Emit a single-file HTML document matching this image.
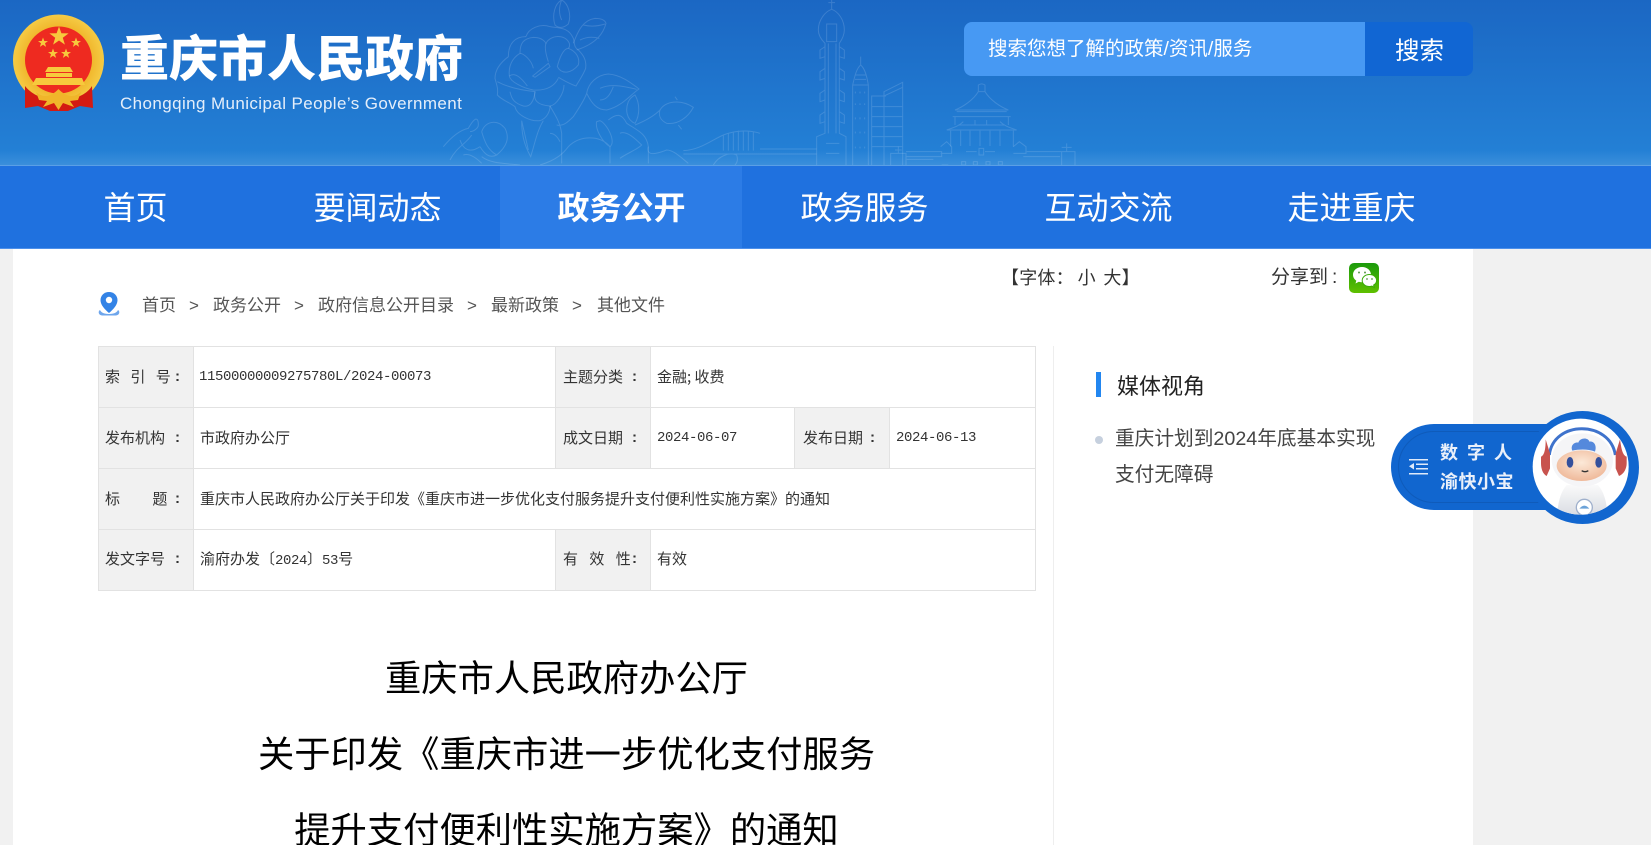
<!DOCTYPE html>
<html lang="zh-CN"><head><meta charset="utf-8"><title>重庆市人民政府</title>
<style>
html,body{margin:0;padding:0;width:1651px;height:845px;overflow:hidden;background:#f1f1f1}
body{position:relative;font-family:"Liberation Sans","Noto Sans CJK SC",sans-serif;color:#333}
div,span,svg{box-sizing:border-box}
.a{position:absolute;white-space:nowrap}
.hd{position:absolute;left:0;top:0;width:1651px;height:165px;background:linear-gradient(#1b67c3,#2482d7)}
.nav{position:absolute;left:0;top:165px;width:1651px;height:84px;background:#1f71df;border-top:1px solid #5a9fe6;border-bottom:1px solid #4d90ea}
.n{position:absolute;top:187px;width:243px;height:42px;line-height:42px;text-align:center;font-size:32px;color:#fff}
.wrap{position:absolute;left:13px;top:249px;width:1460px;height:596px;background:#fff}
.cell{position:absolute;background:#f1f1f1}
.ln{position:absolute;background:#e2e2e2}
.tb{position:absolute;font:15px/20px "WenQuanYi Zen Hei","Noto Sans CJK SC",sans-serif;color:#333;white-space:nowrap}
.c{position:absolute;font:bold 15px/20px "Liberation Sans",sans-serif;color:#333}
.num{font-family:"Liberation Mono",monospace;font-size:14px;letter-spacing:-.4px}
.bc{position:absolute;top:294px;font-size:17px;line-height:24px;color:#555;white-space:nowrap}
.h{position:absolute;left:98px;width:937px;text-align:center;font-size:36.300px;line-height:50px;color:#000;white-space:nowrap}
</style></head><body>
<div class="hd"></div>
<svg class="a" style="left:0;top:0" width="1651" height="165" viewBox="0 0 1651 165" fill="none" stroke="#bcd9f5" stroke-opacity=".2">
<g transform="translate(440,0) scale(.33333)" stroke-width="3">
<path d="M345 75C335 45 345 10 365 0C385 10 395 45 385 72C370 85 355 85 345 75ZM365 0C355 25 358 45 365 60"/>
<path d="M400 130C415 90 430 60 465 55C485 55 495 60 498 70C490 100 470 130 410 150M430 75C450 80 470 80 495 72M420 120C440 110 460 110 478 115"/>
<path d="M258 110C265 85 300 70 330 80C355 85 385 80 400 115C405 130 400 140 415 150C430 165 440 180 437 205C430 225 415 245 408 258C385 250 370 240 355 232"/>
<path d="M258 110C225 110 205 130 205 170C185 185 165 205 165 235C170 255 175 265 172 285C185 300 205 305 225 320C230 345 270 365 300 362C320 355 330 335 330 318"/>
<path d="M240 160C240 130 250 115 280 112C300 112 312 120 318 130C330 105 375 100 388 130C390 138 388 142 385 145M240 160C215 175 205 200 208 228C210 245 250 265 280 270C310 272 340 265 355 235"/>
<path d="M318 130C312 145 320 170 325 185M280 205C275 180 250 160 240 160M385 145C370 145 358 175 352 200C365 225 395 220 415 195C420 175 410 155 385 145"/>
<path d="M278 228L325 190 330 200 285 232ZM208 228C225 215 245 235 262 258M172 245C200 260 240 270 285 275C280 300 290 315 330 318C350 315 372 280 372 255"/>
<path d="M210 275C215 300 225 310 250 318C270 322 282 305 285 275M245 362C245 400 250 430 272 470C285 430 290 395 310 362M245 362L265 450M330 318C345 345 360 365 365 400V490M350 375C370 380 385 365 400 350"/>
<path d="M330 400C345 400 355 415 360 425M400 350C420 320 435 295 440 280C445 250 470 225 505 222C545 225 575 250 597 267C570 285 545 320 500 330C470 330 455 310 440 280M480 265C510 250 550 258 590 268M520 260C510 285 500 300 480 300"/>
<path d="M565 305C555 330 560 360 585 370C600 345 600 310 585 285C575 290 570 295 565 305ZM585 375C610 365 640 350 660 330C675 305 720 295 760 322C745 350 715 375 680 370C660 360 655 345 660 330M705 290L712 300M715 375L725 388"/>
<path d="M470 365C465 385 485 425 510 440C530 425 500 370 480 362ZM505 360C530 340 545 340 560 370C590 390 620 400 625 440C620 460 630 470 680 450C700 450 720 470 745 490M510 440C480 405 420 405 385 440C370 460 350 480 300 495"/>
<path d="M540 400C560 390 590 420 605 435C590 450 560 460 540 475M510 440V490M625 440V490"/>
<path d="M10 440C35 410 60 390 85 385C105 350 115 350 115 375C115 385 100 395 90 395M125 395C135 365 170 355 195 385C210 415 200 440 170 465M125 395C135 430 145 450 170 465C150 475 135 465 120 440M30 480C50 440 80 430 95 405M60 420C70 450 90 460 120 440M70 465C85 460 105 470 125 490M125 470C150 490 190 490 240 495"/>
<path d="M730 452C780 450 815 420 850 405C890 390 930 390 960 400M730 462H960M850 405V452M865 400V452M880 395V452M895 392V452M910 392V452M925 392V452M940 395V452M820 495C835 470 865 455 890 465C895 480 890 490 885 495"/>
</g>
<g transform="translate(800,0) scale(.33333)" stroke-width="3">
<path d="M-120 447H50M-120 462H50"/>
<path d="M50 495V410L75 400V130C65 120 55 105 55 90C55 60 75 35 95 28C115 35 133 60 133 90C133 105 125 120 118 130V400L138 410V495M95 28V0M85 8H105M80 72H110V125H80ZM60 150L75 140V170L60 175ZM133 150L118 140V170L133 175ZM60 215L75 205V235L60 240ZM133 215L118 205V235L133 240ZM60 280L75 270V300L60 305ZM133 280L118 270V300L133 305ZM60 345L75 335V365L60 370ZM133 345L118 335V365L133 370ZM85 130V400M108 130V400M78 430H118M78 460H118"/>
<path d="M158 495V255C165 225 170 205 182 195C194 205 200 225 205 255V495M182 170V195M158 255H205M165 225H198M165 238H198M166 275V280M180 275V280M194 275V280M166 310V315M180 310V315M194 310V315M166 352V358M180 352V358M194 352V358M166 395V400M180 395V400M194 395V400M166 440V445M180 440V445M194 440V445"/>
<path d="M215 495V288H258M252 495V275L308 247V495M215 320H308M215 350H308M215 380H308M215 410H308M215 440H308M252 288L308 262"/>
<path d="M535 275V255Q545 248 555 255V275ZM535 275C520 300 490 320 465 330H625C600 320 570 300 555 275M470 335H620M465 350V375M625 350V375M458 350H632M475 375H615M440 390C470 380 480 375 490 365M650 390C620 380 610 375 600 365M440 390H650M452 392V440M640 392V440M482 392V438M510 392V438M540 392V438M570 392V438M600 392V438M525 360V375M560 360V375"/>
<path d="M272 495V460H318V495M295 440V460M285 450H305M318 455H425V470H318M320 478H400M422 440L440 425 455 440V460H422M498 455H530M555 455H585M537 445H551V465H537ZM640 440L658 425 678 440V460H640M670 470H780M680 455H785V495M785 455H825V495M800 430V455M785 442H815M425 495H445M485 485H497V495H485ZM520 485H532V495H520ZM558 485H570V495H558ZM595 485H607V495H595Z"/>
</g>
</svg>
<div class="a" style="left:0;top:150px;width:1651px;height:15px;background:linear-gradient(rgba(255,255,255,0),rgba(255,255,255,.1))"></div>

<!-- emblem -->
<svg class="a" style="left:10px;top:12px" width="98" height="104" viewBox="10 12 98 104">
<defs><radialGradient id="g" cx="50%" cy="50%" r="50%"><stop offset=".7" stop-color="#f0b52a"/><stop offset="1" stop-color="#f5cb45"/></radialGradient></defs>
<circle cx="58.500" cy="60" r="45.500" fill="url(#g)"/>
<circle cx="58.500" cy="60" r="33.500" fill="#ee2a20"/>
<path d="M59 26.500l2.400 6.800 7.200.1-5.800 4.300 2.100 6.900-5.900-4.100-5.900 4.100 2.100-6.900-5.800-4.300 7.200-.1z" fill="#f7c93d"/>
<g fill="#f7c93d"><path d="M43 37.500l1.300 3.500 3.700.1-3 2.200 1.100 3.600-3.100-2.100-3.100 2.100 1.100-3.600-3-2.200 3.700-.1z"/><path d="M76 37.500l1.300 3.500 3.700.1-3 2.200 1.100 3.600-3.100-2.100-3.100 2.100 1.100-3.600-3-2.200 3.700-.1z"/><path d="M53 48.500l1.300 3.500 3.700.1-3 2.200 1.100 3.600-3.100-2.100-3.100 2.100 1.100-3.600-3-2.200 3.700-.1z"/><path d="M66 48.500l1.300 3.500 3.700.1-3 2.200 1.100 3.600-3.100-2.100-3.100 2.100 1.100-3.600-3-2.200 3.700-.1z"/>
<path d="M48 67H70L73 72H45ZM46 73H72V77H46ZM36 78H82L85 85H32Z"/></g>
<path d="M25 86C30 92 34 94 38 96L50 100H68L80 96C84 94 88 92 92 86L93 108 80 106 68 111H50L38 106 25 108Z" fill="#d31a12"/>
<path d="M36 92C44 99 52 96 58.500 89 65 96 73 99 81 92L78 100 70 101 74 107 63 103 58.500 110 54 103 43 107 47 101 39 100Z" fill="#f0b52a"/>
</svg>
<div class="a" style="left:120px;top:29px;font-size:49px;line-height:62px;font-weight:900;color:#fff;letter-spacing:0">重庆市人民政府</div>
<div class="a" style="left:120px;top:93px;font-size:17px;line-height:22px;color:#e4eefa;letter-spacing:.4px">Chongqing Municipal People’s Government</div>

<!-- search -->
<div class="a" style="left:964px;top:22px;width:401px;height:54px;background:#4799f3;border-radius:8px 0 0 8px"></div>
<div class="a" style="left:988px;top:36px;font-size:19.500px;line-height:26px;color:#fff">搜索您想了解的政策/资讯/服务</div>
<div class="a" style="left:1365px;top:22px;width:108px;height:54px;background:#1166d3;border-radius:0 8px 8px 0;text-align:center;font-size:24.500px;line-height:60px;color:#fff;padding-left:1px">搜索</div>

<!-- nav -->
<div class="nav"></div>
<div class="a" style="left:500px;top:166px;width:242px;height:82px;background:#2c7ce6"></div>
<div class="n" style="left:14px">首页</div>
<div class="n" style="left:256px">要闻动态</div>
<div class="n" style="left:500px;font-weight:700">政务公开</div>
<div class="n" style="left:743px">政务服务</div>
<div class="n" style="left:987px">互动交流</div>
<div class="n" style="left:1230px">走进重庆</div>

<div class="wrap"></div>

<!-- tools -->
<div class="a" style="left:1001px;top:265px;font-size:18px;line-height:26px;color:#333;letter-spacing:.2px">【字体：&thinsp;小&thinsp;&thinsp;大】</div>
<div class="a" style="left:1271px;top:265px;font-size:19px;line-height:26px;color:#333">分享到</div>
<div class="a" style="left:1332px;top:265px;font-size:19px;line-height:26px;color:#333">:</div>
<div class="a" style="left:1349px;top:263px;width:30px;height:30px;border-radius:5px;background:linear-gradient(#1b9a0c,#5fc000)"></div>
<svg class="a" style="left:1349px;top:263px" width="30" height="30" viewBox="0 0 30 30">
<path d="M13 4C7.800 4 4 7.500 4 11.700c0 2.500 1.300 4.500 3.300 5.900L6.500 20.500l3.300-1.800c1 .3 2.100.5 3.200.5 5.200 0 9-3.400 9-7.500S18.200 4 13 4Z" fill="#fff"/>
<path d="M20.500 11.500c-4.200 0-7.300 2.700-7.300 6s3.100 6 7.300 6c.9 0 1.700-.1 2.400-.4l2.300 1.300-.6-2.300c1.800-1.100 3-2.800 3-4.600 0-3.300-3.100-6-7.100-6Z" fill="#fff" stroke="#3aab08" stroke-width="1"/>
<g fill="#5a9a4a"><circle cx="10" cy="9.500" r="1"/><circle cx="16" cy="9.500" r="1"/><circle cx="18" cy="16" r=".9"/><circle cx="23" cy="16" r=".9"/></g></svg>

<!-- breadcrumb -->
<svg class="a" style="left:97px;top:291px" width="24" height="26" viewBox="0 0 24 26">
<path d="M3 19C1 20 1 24 5 24.500H19C23 24 23 20 21 19C20 21 18 23 12 23S4 21 3 19Z" fill="#6ea6ec"/>
<path d="M12 1C7 1 3.500 4.700 3.500 9.200 3.500 14 8 18.500 12 22 16 18.500 20.500 14 20.500 9.200 20.500 4.700 17 1 12 1Z" fill="#3383e6"/>
<circle cx="12" cy="9" r="3.200" fill="#fff"/></svg>
<div class="bc" style="left:142px">首页</div><div class="bc" style="left:189px">&gt;</div>
<div class="bc" style="left:213px">政务公开</div><div class="bc" style="left:294px">&gt;</div>
<div class="bc" style="left:318px">政府信息公开目录</div><div class="bc" style="left:467px">&gt;</div>
<div class="bc" style="left:491px">最新政策</div><div class="bc" style="left:572px">&gt;</div>
<div class="bc" style="left:597px">其他文件</div>

<!-- table -->
<div class="cell" style="left:98px;top:346px;width:96px;height:245px"></div>
<div class="cell" style="left:555px;top:346px;width:95px;height:122px"></div>
<div class="cell" style="left:555px;top:529px;width:95px;height:61px"></div>
<div class="cell" style="left:795px;top:407px;width:95px;height:61px"></div>
<div class="ln" style="left:98px;top:346px;width:938px;height:1px"></div>
<div class="ln" style="left:98px;top:407px;width:938px;height:1px"></div>
<div class="ln" style="left:98px;top:468px;width:938px;height:1px"></div>
<div class="ln" style="left:98px;top:529px;width:938px;height:1px"></div>
<div class="ln" style="left:98px;top:590px;width:938px;height:1px"></div>
<div class="ln" style="left:98px;top:346px;width:1px;height:245px"></div>
<div class="ln" style="left:193px;top:346px;width:1px;height:245px"></div>
<div class="ln" style="left:1035px;top:346px;width:1px;height:245px"></div>
<div class="ln" style="left:555px;top:346px;width:1px;height:122px"></div>
<div class="ln" style="left:650px;top:346px;width:1px;height:122px"></div>
<div class="ln" style="left:555px;top:529px;width:1px;height:61px"></div>
<div class="ln" style="left:650px;top:529px;width:1px;height:61px"></div>
<div class="ln" style="left:794px;top:407px;width:1px;height:61px"></div>
<div class="ln" style="left:889px;top:407px;width:1px;height:61px"></div>
<div class="tb" style="left:105px;top:367px;word-spacing:7px">索 引 号</div><div class="c" style="left:175px;top:367px">:</div>
<div class="tb num" style="left:199px;top:367px">11500000009275780L/2024-00073</div>
<div class="tb" style="left:563px;top:367px">主题分类</div><div class="c" style="left:632px;top:367px">:</div>
<div class="tb" style="left:657px;top:367px">金融; 收费</div>
<div class="tb" style="left:105px;top:428px">发布机构</div><div class="c" style="left:175px;top:428px">:</div>
<div class="tb" style="left:200px;top:428px">市政府办公厅</div>
<div class="tb" style="left:563px;top:428px">成文日期</div><div class="c" style="left:632px;top:428px">:</div>
<div class="tb num" style="left:657px;top:428px">2024-06-07</div>
<div class="tb" style="left:803px;top:428px">发布日期</div><div class="c" style="left:870px;top:428px">:</div>
<div class="tb num" style="left:896px;top:428px">2024-06-13</div>
<div class="tb" style="left:105px;top:489px;word-spacing:29px">标 题</div><div class="c" style="left:175px;top:489px">:</div>
<div class="tb" style="left:200px;top:489px">重庆市人民政府办公厅关于印发《重庆市进一步优化支付服务提升支付便利性实施方案》的通知</div>
<div class="tb" style="left:105px;top:549px">发文字号</div><div class="c" style="left:175px;top:549px">:</div>
<div class="tb" style="left:200px;top:549px">渝府办发〔<span class="num">2024</span>〕<span class="num">53</span>号</div>
<div class="tb" style="left:563px;top:549px;word-spacing:8px">有 效 性</div><div class="c" style="left:632px;top:549px">:</div>
<div class="tb" style="left:657px;top:549px">有效</div>

<div class="a" style="left:1053px;top:346px;width:1px;height:499px;background:#eeeeee"></div>

<!-- heading -->
<div class="h" style="top:654px">重庆市人民政府办公厅</div>
<div class="h" style="top:730px">关于印发《重庆市进一步优化支付服务</div>
<div class="h" style="top:806px">提升支付便利性实施方案》的通知</div>

<!-- sidebar -->
<div class="a" style="left:1096px;top:372px;width:5px;height:25px;background:#2286f0"></div>
<div class="a" style="left:1117px;top:372px;font-size:22px;line-height:30px;color:#222">媒体视角</div>
<div class="a" style="left:1095px;top:436px;width:8px;height:8px;border-radius:50%;background:#c6d0de"></div>
<div class="a" style="left:1115px;top:421px;font-size:19.700px;line-height:36px;color:#444">重庆计划到2024年底基本实现<br>支付无障碍</div>

<!-- widget -->
<div class="a" style="left:1391px;top:424px;width:180px;height:86px;border-radius:43px 0 0 43px;background:#1166cf"></div>
<div class="a" style="left:1398px;top:431px;width:170px;height:72px;border-radius:36px 0 0 36px;border:1px solid #0f5bba"></div>
<svg class="a" style="left:1408px;top:457px" width="21" height="20" viewBox="0 0 21 20" fill="#dfeafa"><rect x="1" y="2" width="19" height="1.500"/><rect x="8" y="6.500" width="12" height="1.500"/><rect x="8" y="11" width="12" height="1.500"/><rect x="1" y="16" width="19" height="1.500"/><path d="M6 6L1 9.200 6 12.500Z"/></svg>
<div class="a" style="left:1440px;top:440px;font-size:18px;line-height:26px;font-weight:700;color:#e9f0fa;letter-spacing:9px">数字人</div>
<div class="a" style="left:1440px;top:469px;font-size:18px;line-height:26px;font-weight:700;color:#e9f0fa;letter-spacing:.5px">渝快小宝</div>
<div class="a" style="left:1526px;top:411px;width:113px;height:113px;border-radius:50%;background:#1166cf"></div>
<svg class="a" style="left:1380px;top:400px" width="271" height="130" viewBox="0 0 813 390">
<defs><clipPath id="c"><circle cx="602" cy="200" r="144"/></clipPath>
<radialGradient id="f" cx="50%" cy="40%" r="65%"><stop offset="0" stop-color="#fce9d8"/><stop offset="1" stop-color="#eeb595"/></radialGradient>
<linearGradient id="b" x1="0" y1="0" x2="0" y2="1"><stop offset="0" stop-color="#fafafa"/><stop offset="1" stop-color="#d8dbe2"/></linearGradient></defs>
<circle cx="602" cy="200" r="144" fill="#fff"/>
<g clip-path="url(#c)">
<path d="M508 165C520 60 690 60 706 165" fill="none" stroke="#3f73cc" stroke-width="9"/>
<path d="M497 118L510 160V205L500 228C488 222 483 205 483 190V170C494 165 497 145 497 118Z" fill="#c8534e"/>
<path d="M720 118L707 160V205L717 228C732 222 740 205 740 190V170C727 165 724 145 720 118Z" fill="#c8534e"/>
<path d="M560 255C538 280 532 320 532 350H682C682 320 676 280 654 255Z" fill="url(#b)"/>
<ellipse cx="607" cy="180" rx="92" ry="80" fill="#f5f5f7"/>
<ellipse cx="605" cy="197" rx="75" ry="46" fill="url(#f)"/>
<path d="M577 152C570 135 585 125 595 128 600 112 625 112 628 125 640 122 652 135 645 155 625 147 600 147 577 152Z" fill="#5589dc"/>
<ellipse cx="570" cy="187" rx="10" ry="16" fill="#33509c"/><ellipse cx="656" cy="187" rx="10" ry="16" fill="#33509c"/>
<path d="M605 212Q615 218 625 212" fill="none" stroke="#333" stroke-width="4"/>
<circle cx="613" cy="322" r="24" fill="#fff" stroke="#9fb0cc" stroke-width="4"/>
<path d="M598 326Q613 308 628 326Z" fill="#6ba2d8"/>
</g></svg>
</body></html>
